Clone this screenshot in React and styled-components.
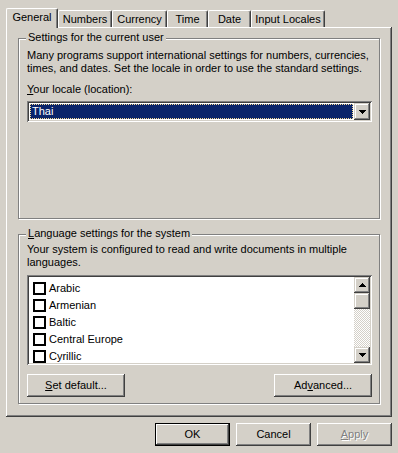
import styled, { createGlobalStyle } from 'styled-components';

const face = '#D4D0C8';
const raised = `inset -1px -1px #404040, inset 1px 1px #fff, inset -2px -2px #808080, inset 2px 2px ${face}`;
const raisedScroll = `inset -1px -1px #404040, inset 1px 1px ${face}, inset -2px -2px #808080, inset 2px 2px #fff`;
const sunken = `inset 1px 1px #808080, inset -1px -1px #fff, inset 2px 2px #404040, inset -2px -2px ${face}`;

const Global = createGlobalStyle`
  html, body { margin: 0; background: ${face}; }
  body { font: 11px/13px "Liberation Sans", Arial, sans-serif; color: #000; }
`;

const Dialog = styled.div`
  width: 398px;
  height: 453px;
  box-sizing: border-box;
  padding: 8px 6px 0;
  display: flex;
  flex-direction: column;
`;

const TabRow = styled.div`
  display: flex;
  align-items: flex-end;
  height: 19px;
  padding-left: 2px;
`;

const Tab = styled.div`
  box-sizing: border-box;
  width: ${p => p.$w}px;
  flex: none;
  height: ${p => (p.$active ? 20 : 17)}px;
  padding-top: 2px;
  margin: ${p => (p.$active ? '0 0 -1px -2px' : '0')};
  border-top: 1px solid #fff;
  border-left: 1px solid #fff;
  border-right: 1px solid #404040;
  border-top-left-radius: 2px;
  border-top-right-radius: 2px;
  box-shadow: inset -1px 0 #808080;
  background: ${face};
  text-align: center;
  white-space: nowrap;
  position: relative;
  z-index: ${p => (p.$active ? 1 : 0)};
`;

const Panel = styled.div`
  box-sizing: border-box;
  height: 390px;
  padding: 11px 12px 13px;
  box-shadow: ${raised};
  display: flex;
  flex-direction: column;
  gap: 15px;
`;

const Group = styled.div`
  box-sizing: border-box;
  height: ${p => p.$h}px;
  border: 1px solid #808080;
  box-shadow: inset 1px 1px #fff, 1px 1px #fff;
  padding: 0 7px 6px 8px;
  display: flex;
  flex-direction: column;
`;

const Legend = styled.div`
  align-self: flex-start;
  margin: -8px 0 0 -1px;
  padding: 0 2px;
  background: ${face};
`;

const Text = styled.div`
  margin-top: ${p => p.$mt}px;
  white-space: nowrap;
`;

const Combo = styled.div`
  box-sizing: border-box;
  height: 21px;
  margin-top: 5px;
  padding: 2px;
  background: #fff;
  box-shadow: ${sunken};
  display: flex;
`;

const ComboValue = styled.div`
  flex: 1;
  margin: 1px;
  padding-left: 1px;
  background: #0a246a;
  color: #fff;
  border: 1px dotted #f5db95;
`;

const ArrowButton = styled.div`
  box-sizing: border-box;
  width: 16px;
  height: ${p => p.$h || 16}px;
  flex: none;
  background: ${face};
  box-shadow: ${raisedScroll};
  display: flex;
  align-items: center;
  justify-content: center;
  svg { display: block; }
`;

const ListBox = styled.div`
  box-sizing: border-box;
  height: 90px;
  margin-top: 6px;
  padding: 2px;
  background: #fff;
  box-shadow: ${sunken};
  display: flex;
`;

const Items = styled.div`
  flex: 1;
  overflow: hidden;
  padding: 3px 0 0 4px;
`;

const Row = styled.div`
  height: 17px;
  display: flex;
  align-items: center;
  gap: 3px;
  white-space: nowrap;
`;

const Check = styled.span`
  box-sizing: border-box;
  width: 13px;
  height: 13px;
  border: 2px solid #000;
  background: #fff;
  flex: none;
`;

const ScrollBar = styled.div`
  width: 16px;
  display: flex;
  flex-direction: column;
`;

const Track = styled.div`
  flex: 1;
  background: repeating-conic-gradient(${face} 0 25%, #fff 0 50%) 0 0 / 2px 2px;
`;

const ButtonRow = styled.div`
  display: flex;
  justify-content: ${p => (p.$end ? 'flex-end' : 'space-between')};
  gap: 6px;
  margin-top: ${p => p.$mt}px;
`;

const Button = styled.button`
  box-sizing: border-box;
  width: ${p => p.$w}px;
  height: 23px;
  padding: 0 0 1px;
  border: none;
  background: ${face};
  box-shadow: ${p => p.$default
    ? `inset 0 0 0 1px #000, inset -2px -2px #404040, inset 2px 2px #fff, inset -3px -3px #808080, inset 3px 3px ${face}`
    : raised};
  font: inherit;
  color: ${p => (p.disabled ? '#808080' : '#000')};
  text-shadow: ${p => (p.disabled ? '1px 1px #fff' : 'none')};
`;

const Down = () => (
  <svg width="7" height="4" shapeRendering="crispEdges">
    <path d="M0 0h7v1h-1v1h-1v1h-1v1h-1v-1h-1v-1h-1v-1h-1z" fill="#000" />
  </svg>
);

const Up = () => (
  <svg width="7" height="4" shapeRendering="crispEdges">
    <path d="M3 0h1v1h1v1h1v1h1v1h-7v-1h1v-1h1v-1h1z" fill="#000" />
  </svg>
);

const tabs = [
  ['General', 52],
  ['Numbers', 54],
  ['Currency', 55],
  ['Time', 41],
  ['Date', 43],
  ['Input Locales', 74],
];
const languages = ['Arabic', 'Armenian', 'Baltic', 'Central Europe', 'Cyrillic'];

export default function App() {
  return (
    <Dialog>
      <Global />
      <TabRow>
        {tabs.map(([t, w], i) => (
          <Tab key={t} $w={w} $active={i === 0}>{t}</Tab>
        ))}
      </TabRow>
      <Panel>
        <Group $h={181}>
          <Legend>Settings for the current user</Legend>
          <Text $mt={5}>
            Many programs support international settings for numbers, currencies,
            <br />
            times, and dates. Set the locale in order to use the standard settings.
          </Text>
          <Text $mt={8}><u>Y</u>our locale (location):</Text>
          <Combo>
            <ComboValue>Thai</ComboValue>
            <ArrowButton $h={17}><Down /></ArrowButton>
          </Combo>
        </Group>
        <Group $h={170}>
          <Legend><u>L</u>anguage settings for the system</Legend>
          <Text $mt={3}>
            Your system is configured to read and write documents in multiple
            <br />
            languages.
          </Text>
          <ListBox>
            <Items>
              {languages.map(l => (
                <Row key={l}><Check />{l}</Row>
              ))}
            </Items>
            <ScrollBar>
              <ArrowButton><Up /></ArrowButton>
              <ArrowButton />
              <Track />
              <ArrowButton><Down /></ArrowButton>
            </ScrollBar>
          </ListBox>
          <ButtonRow $mt={9}>
            <Button $w={98}><u>S</u>et default...</Button>
            <Button $w={98}>Ad<u>v</u>anced...</Button>
          </ButtonRow>
        </Group>
      </Panel>
      <ButtonRow $end $mt={6}>
        <Button $w={75} $default>OK</Button>
        <Button $w={75}>Cancel</Button>
        <Button $w={75} disabled><u>A</u>pply</Button>
      </ButtonRow>
    </Dialog>
  );
}
